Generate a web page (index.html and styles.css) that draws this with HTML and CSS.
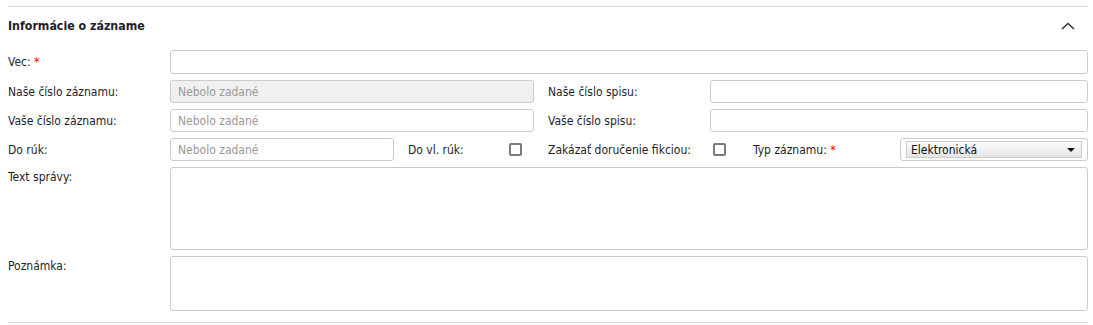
FILE: index.html
```html
<!DOCTYPE html>
<html>
<head>
    <meta charset="UTF-8">
    <title>Informácie o zázname</title>
    <link rel="stylesheet" href="styles.css">
</head>
<body>
    <div class="panel">
        <div class="panel-head">
            <h2>Informácie o zázname</h2>
            <svg class="toggle" width="14" height="8" viewBox="0 0 14 8">
                <path d="M1 7 L7 1.5 L13 7" fill="none" stroke="#333" stroke-width="1.6"/>
            </svg>
        </div>

        <div class="form">
            <label class="lbl">Vec: <span class="req">*</span></label>
            <input type="text" class="input span-all tall">

            <label class="lbl">Naše číslo záznamu:</label>
            <input type="text" class="input left-wide" placeholder="Nebolo zadané" disabled>
            <label class="lbl">Naše číslo spisu:</label>
            <input type="text" class="input right-wide">

            <label class="lbl">Vaše číslo záznamu:</label>
            <input type="text" class="input left-wide" placeholder="Nebolo zadané">
            <label class="lbl">Vaše číslo spisu:</label>
            <input type="text" class="input right-wide">

            <label class="lbl">Do rúk:</label>
            <input type="text" class="input" placeholder="Nebolo zadané">
            <label class="lbl pad">Do vl. rúk:</label>
            <span class="check"></span>
            <label class="lbl">Zakázať doručenie fikciou:</label>
            <span class="check shift"></span>
            <label class="lbl">Typ záznamu: <span class="req">*</span></label>
            <div class="select-box">
                <div class="select">
                    <span>Elektronická</span>
                    <span class="arrow"></span>
                </div>
            </div>

            <label class="lbl top">Text správy:</label>
            <textarea class="input span-all area-big"></textarea>

            <label class="lbl top">Poznámka:</label>
            <textarea class="input span-all area-small"></textarea>
        </div>
    </div>
</body>
</html>
```

FILE: styles.css
```css
body {
    font-family: "DejaVu Sans Condensed", "DejaVu Sans", sans-serif;
    font-size: 12px;
    color: #1e1e28;
    margin: 0;
    padding: 6px 5px 0 8px;
    background: #fff;
}

.panel {
    border-top: 1px solid #ddd;
    border-bottom: 1px solid #ddd;
    padding-bottom: 11px;
}

.panel-head {
    height: 38px;
    display: flex;
    align-items: center;
    justify-content: space-between;
    padding-right: 13px;
}

.panel-head h2 {
    margin: 0;
    font-size: 12.3px;
    font-weight: bold;
    color: #1e1e28;
}

.form {
    padding-top: 5px;
    display: grid;
    grid-template-columns: 162px 224px 115px 39px 162px 43px 147px 1fr;
    row-gap: 6px;
    align-items: center;
}

.lbl {
    white-space: nowrap;
}

.lbl.pad {
    padding-left: 14px;
}

.lbl.top {
    align-self: start;
    padding-top: 3px;
}

.req {
    color: #e00;
}

.input {
    box-sizing: border-box;
    height: 23px;
    border: 1px solid #ccc;
    border-radius: 3px;
    background: #fff;
    padding: 0 7px;
    font-family: inherit;
    font-size: 12px;
    color: #222;
    margin: 0;
    display: block;
}

.input.tall {
    height: 24px;
}

.input::placeholder {
    color: #999;
}

.input:disabled {
    background: #f0f0f0;
}

.span-all {
    grid-column: 2 / -1;
}

.left-wide {
    grid-column: 2 / 5;
    margin-right: 14px;
}

.right-wide {
    grid-column: 6 / -1;
}

.area-big {
    height: 83px;
    resize: none;
}

.area-small {
    height: 55px;
    resize: none;
}

.check {
    width: 13px;
    height: 13px;
    box-sizing: border-box;
    border: 2px solid #7a7a7a;
    border-radius: 2px;
}

.check.shift {
    margin-left: 3px;
}

.select-box {
    box-sizing: border-box;
    height: 23px;
    border: 1px solid #ccc;
    border-radius: 3px;
    padding: 2px 5px;
}

.select {
    box-sizing: border-box;
    height: 17px;
    border: 1px solid #ccc;
    background: linear-gradient(#fdfdfd, #e4e4e4);
    display: flex;
    align-items: center;
    justify-content: space-between;
    padding: 0 6px 0 4px;
    color: #111;
}

.arrow {
    width: 0;
    height: 0;
    border-left: 4px solid transparent;
    border-right: 4px solid transparent;
    border-top: 4px solid #111;
}
```
